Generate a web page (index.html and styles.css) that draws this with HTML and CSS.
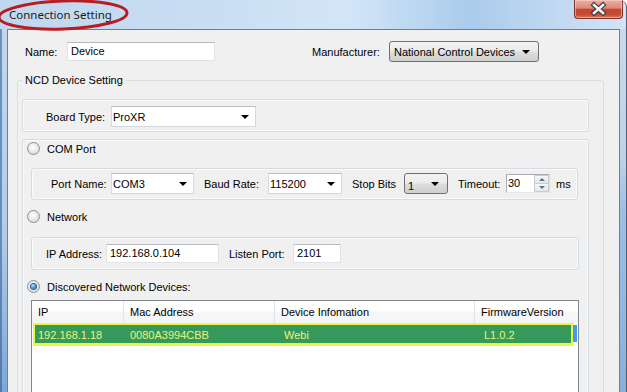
FILE: index.html
```html
<!DOCTYPE html>
<html lang="en">
<head>
    <meta charset="UTF-8">
    <meta name="viewport" content="width=device-width, initial-scale=1.0">
    <title>Connection Setting</title>
    <link rel="stylesheet" href="styles.css">
</head>
<body>
    <div class="window">
        <div class="titlebar">
            <span class="title">Connection Setting</span>
            <div class="close-btn">
                <svg width="47" height="18" viewBox="0 0 47 18">
                    <path d="M19 5 L28 13 M28 5 L19 13" stroke="#3c3f44" stroke-width="5" stroke-linecap="square" fill="none"/>
                    <path d="M19 5 L28 13 M28 5 L19 13" stroke="#f4f4f4" stroke-width="2.6" stroke-linecap="square" fill="none"/>
                </svg>
            </div>
            <svg class="mark" width="140" height="36" viewBox="0 0 140 36">
                <ellipse cx="66" cy="17" rx="64" ry="14" transform="rotate(-2 66 17)" fill="none" stroke="#b81d24" stroke-width="3"/>
            </svg>
        </div>

        <div class="frame">
            <div class="edge edge-left"></div>
            <div class="client">
                <div class="top-row">
                    <span class="lbl w-name">Name:</span>
                    <div class="textbox w-namebox">Device</div>
                    <span class="lbl w-manu">Manufacturer:</span>
                    <div class="combo-aero w-manubox"><span>National Control Devices</span><i class="arrow"></i></div>
                </div>

                <fieldset class="group">
                    <legend>NCD Device Setting</legend>

                    <div class="panel board-panel">
                        <span class="lbl w-board">Board Type:</span>
                        <div class="combo w-boardbox"><span>ProXR</span><i class="arrow"></i></div>
                    </div>

                    <div class="panel conn-panel">
                        <div class="radio-row"><span class="radio"></span><span>COM Port</span></div>

                        <div class="panel sub-panel com-row">
                            <span class="lbl w-port">Port Name:</span>
                            <div class="combo w-portbox"><span>COM3</span><i class="arrow"></i></div>
                            <span class="lbl gap w-baud">Baud Rate:</span>
                            <div class="combo w-baudbox"><span>115200</span><i class="arrow"></i></div>
                            <span class="lbl gap w-stop">Stop Bits</span>
                            <div class="combo-aero w-stopbox"><span class="low">1</span><i class="arrow"></i></div>
                            <span class="lbl gap w-timeout">Timeout:</span>
                            <div class="spin">
                                <span class="spin-val">30</span>
                                <div class="spin-btns">
                                    <div class="spin-btn"><i class="tri-up"></i></div>
                                    <div class="spin-btn"><i class="tri-down"></i></div>
                                </div>
                            </div>
                            <span class="lbl unit">ms</span>
                        </div>

                        <div class="radio-row net-row"><span class="radio"></span><span>Network</span></div>

                        <div class="panel sub-panel ip-row">
                            <span class="lbl w-ip">IP Address:</span>
                            <div class="textbox w-ipbox">192.168.0.104</div>
                            <span class="lbl gap w-listen">Listen Port:</span>
                            <div class="textbox w-portnum">2101</div>
                        </div>

                        <div class="radio-row net-row"><span class="radio on"></span><span>Discovered Network Devices:</span></div>

                        <div class="listview">
                            <div class="lv-head">
                                <div class="hcell c1">IP</div>
                                <div class="hcell c2">Mac Address</div>
                                <div class="hcell c3">Device Infomation</div>
                                <div class="hcell c4">FirmwareVersion</div>
                            </div>
                            <div class="lv-line">
                                <div class="lv-row">
                                    <span class="rcell r1">192.168.1.18</span>
                                    <span class="rcell r2">0080A3994CBB</span>
                                    <span class="rcell r3">Webi</span>
                                    <span class="rcell">L1.0.2</span>
                                </div>
                                <div class="lv-tail"></div>
                            </div>
                        </div>
                    </div>
                </fieldset>
            </div>
            <div class="edge edge-right"></div>
        </div>
    </div>
</body>
</html>
```

FILE: styles.css
```css
body {
    margin: 0;
    width: 627px;
    height: 392px;
    overflow: hidden;
    font-family: "Liberation Sans", Arial, sans-serif;
    font-size: 11px;
    color: #000;
}
.window {
    height: 392px;
    display: flex;
    flex-direction: column;
    position: relative;
    overflow: hidden;
    border-top-right-radius: 7px;
    border-right: 1px solid #4f6076;
    background: linear-gradient(90deg, #c0d7ef 0%, #c9def3 35%, #d3e6f7 55%, #aacbec 75%, #c2daf2 90%, #d2e4f6 100%);
}

/* title bar */
.titlebar {
    height: 29px;
    display: flex;
    align-items: center;
    padding-left: 9px;
    flex-shrink: 0;
}
.title {
    font-family: "Noto Sans", "Liberation Sans", sans-serif;
    font-size: 11.5px;
    color: #1b1b1b;
    margin-top: -1px;
}
.close-btn {
    margin-left: auto;
    margin-right: 3px;
    align-self: flex-start;
    width: 47px;
    height: 18px;
    border: 1px solid #7a3329;
    border-top: none;
    border-radius: 0 0 4px 4px;
    background: linear-gradient(#eab0a2 0%, #dc8a79 45%, #c6472f 52%, #c44a33 80%, #d9785e 100%);
    box-shadow: inset 0 0 0 1px rgba(255, 220, 210, 0.5);
}
.close-btn svg {
    display: block;
}
.mark {
    position: absolute;
    left: -3px;
    top: -2px;
}

/* frame */
.frame {
    flex: 1;
    display: flex;
    min-height: 0;
}
.edge {
    width: 7px;
    flex-shrink: 0;
}
.edge-left {
    background: linear-gradient(90deg, rgba(40, 90, 150, 0.55) 0 2px, transparent 2px),
                linear-gradient(#c1d7ef, #b3cce8 55%, #7fa6d3);
}
.edge-right {
    width: 6px;
    background: linear-gradient(#c9d9ea, #bdd3ea 35%, #9dbfe4 50%, #89b0dc);
}
.client {
    width: 611px;
    background: #f0f0f0;
    border: 1px solid #6f7f92;
    border-bottom: none;
    overflow: hidden;
}

/* common controls */
.lbl {
    flex-shrink: 0;
    white-space: nowrap;
}
.gap {
    margin-left: 10px;
}
.textbox {
    box-sizing: border-box;
    height: 19px;
    line-height: 17px;
    padding-left: 3px;
    background: #fff;
    border: 1px solid #dfe3e8;
    border-top-color: #b5b9c0;
}
.combo {
    box-sizing: border-box;
    height: 21px;
    display: flex;
    align-items: center;
    padding: 0 6px 0 1px;
    background: #fff;
    border: 1px solid #d5d9de;
    border-top-color: #b9bdc3;
}
.combo span, .combo-aero span {
    flex: 1;
}
.combo-aero {
    box-sizing: border-box;
    height: 21px;
    display: flex;
    align-items: center;
    padding: 0 8px 0 4px;
    border: 1px solid #707070;
    border-radius: 3px;
    background: linear-gradient(#f3f3f3 0%, #ebebeb 48%, #dddddd 52%, #cfcfcf 100%);
}
.combo-aero .low {
    padding-top: 4px;
}
.arrow {
    width: 0;
    height: 0;
    border-left: 4px solid transparent;
    border-right: 4px solid transparent;
    border-top: 4px solid #000;
}

/* top row */
.top-row {
    display: flex;
    align-items: center;
    height: 21px;
    margin-top: 11px;
    padding-left: 17px;
}
.w-name { width: 42px; }
.w-namebox { width: 148px; }
.w-manu { width: 77px; margin-left: 97px; }
.w-manubox { width: 150px; }

/* group box */
.group {
    box-sizing: border-box;
    width: 587px;
    margin: 11px 0 0 9px;
    padding: 12px 4px 0 4px;
    border: 1px solid #d5dfe5;
    border-radius: 3px;
    min-width: 0;
}
.group legend {
    padding: 0 3px;
    line-height: 14px;
}
.panel {
    box-sizing: border-box;
    border: 1px solid #d3dbe3;
    border-radius: 3px;
    box-shadow: inset 0 0 0 1px #fafafa;
}
.board-panel {
    width: 567px;
    display: flex;
    align-items: center;
    padding: 6px 0 4px 23px;
}
.w-board { width: 65px; }
.w-boardbox { width: 145px; }

.conn-panel {
    width: 567px;
    margin-top: 7px;
    padding-bottom: 60px;
}
.radio-row {
    height: 17px;
    display: flex;
    align-items: center;
    padding-left: 4px;
}
.radio-row .radio {
    margin-right: 7px;
}
.net-row {
    margin-top: 8px;
}
.radio {
    box-sizing: border-box;
    width: 13px;
    height: 13px;
    border-radius: 50%;
    border: 1px solid #8c8f94;
    background: radial-gradient(circle at 45% 40%, #ffffff 0%, #e6e6e6 55%, #cfd0d2 100%);
    display: flex;
    align-items: center;
    justify-content: center;
}
.radio.on::after {
    content: "";
    width: 5px;
    height: 5px;
    border-radius: 50%;
    background: radial-gradient(circle at 40% 35%, #b6e3ff 0%, #3c8ad8 55%, #14478f 100%);
    box-shadow: 0 0 0 1px #2a5f9e;
}

.sub-panel {
    display: flex;
    align-items: center;
    margin-left: 8px;
}
.com-row {
    width: 547px;
    margin-top: 11px;
    padding: 4px 0 5px 19px;
}
.w-port { width: 60px; }
.w-portbox { width: 83px; }
.w-baud { width: 64px; }
.w-baudbox { width: 74px; }
.w-stop { width: 52px; }
.w-stopbox { width: 44px; padding-left: 3px; }
.w-timeout { width: 48px; }
.unit { margin-left: 6px; }

.spin {
    box-sizing: border-box;
    width: 44px;
    height: 19px;
    display: flex;
    background: #fff;
    border: 1px solid #abadb3;
    border-right-color: #dbdfe6;
    border-bottom-color: #e3e9ef;
}
.spin-val {
    flex: 1;
    padding-left: 1px;
    line-height: 16px;
}
.spin-btns {
    width: 15px;
    display: flex;
    flex-direction: column;
}
.spin-btn {
    flex: 1;
    display: flex;
    align-items: center;
    justify-content: center;
    border: 1px solid #c9ccd1;
    background: linear-gradient(#f7f7f7, #e4e6e9);
}
.spin-btn + .spin-btn {
    border-top: none;
}
.tri-up, .tri-down {
    width: 0;
    height: 0;
    border-left: 3px solid transparent;
    border-right: 3px solid transparent;
}
.tri-up { border-bottom: 3px solid #5c6f93; }
.tri-down { border-top: 3px solid #5c6f93; }

.ip-row {
    width: 548px;
    margin-top: 12px;
    padding: 6px 0 6px 14px;
}
.w-ip { width: 60px; }
.w-ipbox { width: 113px; }
.w-listen { width: 64px; }
.w-portnum { width: 48px; }

/* list view */
.listview {
    box-sizing: border-box;
    width: 548px;
    height: 120px;
    margin: 5px 0 0 8px;
    background: #fff;
    border: 1px solid #828790;
}
.lv-head {
    display: flex;
    height: 22px;
    background: linear-gradient(#ffffff 0%, #ffffff 45%, #f6f7f9 50%, #f3f4f6 100%);
}
.hcell {
    box-sizing: border-box;
    height: 22px;
    padding: 3px 0 0 6px;
    line-height: 17px;
    border-right: 1px solid #e1e4e9;
}
.c1 { width: 92px; }
.c2 { width: 151px; }
.c3 { width: 200px; }
.c4 { flex: 1; border-right: none; }

.lv-line {
    display: flex;
    align-items: flex-start;
}
.lv-row {
    box-sizing: border-box;
    width: 540px;
    height: 23px;
    margin-left: 1px;
    display: flex;
    align-items: center;
    padding-top: 1px;
    background: #34995a;
    border: 2px solid #eef53e;
    border-bottom-width: 3px;
    color: #eef27a;
}
.rcell {
    flex-shrink: 0;
}
.r1 { width: 95px; padding-left: 3px; box-sizing: border-box; }
.r2 { width: 154px; }
.r3 { width: 200px; }
.lv-tail {
    width: 4px;
    height: 17px;
    margin-top: 2px;
    background: #3d9bf5;
}
```
